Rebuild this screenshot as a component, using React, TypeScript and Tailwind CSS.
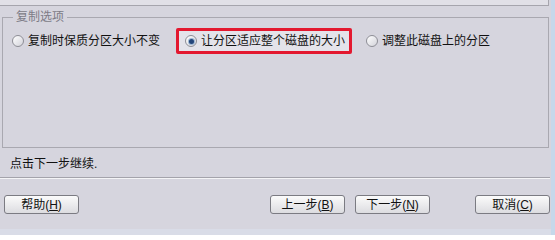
import React from "react";

const FONT = { fontFamily: '"Liberation Sans","Noto Sans CJK SC",sans-serif' };

function Radio({ checked }: { checked?: boolean }) {
  return (
    <span className="flex h-[12px] w-[12px] shrink-0 items-center justify-center rounded-full border border-[#8e8e96] bg-linear-to-br from-white to-[#d3d3da]">
      {checked && (
        <span className="flex h-[7px] w-[7px] items-center justify-center rounded-full bg-[#9fb7d3]">
          <span className="h-[5px] w-[5px] rounded-full bg-[#23457a]" />
        </span>
      )}
    </span>
  );
}

function Btn({ label, acc, className }: { label: string; acc: string; className?: string }) {
  return (
    <div
      className={
        "flex h-[19px] w-[75px] items-center justify-center rounded-[3px] border border-[#7b7b82] bg-linear-to-b from-[#fbfbfb] to-[#dcdce0] text-[12px] leading-[14px] text-[#111] " +
        (className ?? "")
      }
    >
      <span>
        {label}(<span className="underline">{acc}</span>)
      </span>
    </div>
  );
}

export default function App() {
  return (
    <div className="flex h-[235px] w-[555px] overflow-hidden bg-[#d6d5de]" style={FONT}>
      <div className="flex w-[551px] flex-col">
        <div className="h-[6px] w-[549px] border-r border-b border-[#a6a5ad] bg-[#e1e0e7]" />
        <fieldset className="mt-[4px] ml-[2px] h-[138px] w-[547px] border border-[#a9a8b0]">
          <legend className="ml-[10px] px-[3px] text-[12px] leading-[14px] text-[#7d7c86]">复制选项</legend>
          <div className="mt-[4px] flex h-[26px] items-center pl-[9px] text-[12px] leading-[14px] text-[#111]">
            <Radio />
            <span className="ml-[4px]">复制时保质分区大小不变</span>
            <div className="ml-[16px] flex h-[26px] w-[176px] items-center rounded-[2px] border-[3px] border-[#e3182f] bg-[#e4e3ea] pl-[6px]">
              <Radio checked />
              <span className="ml-[4px]">让分区适应整个磁盘的大小</span>
            </div>
            <div className="ml-[14px] flex items-center">
              <Radio />
              <span className="ml-[4px]">调整此磁盘上的分区</span>
            </div>
          </div>
        </fieldset>
        <div className="h-[29px] pt-[9px] pl-[10px] text-[12px] leading-[14px] text-[#111]">点击下一步继续.</div>
        <div className="h-[2px] w-[550px] border-t border-b border-t-[#a4a3ab] border-b-[#f4f4f6]" />
        <div className="mt-[16px] flex">
          <Btn label="帮助" acc="H" className="ml-[4px]" />
          <Btn label="上一步" acc="B" className="ml-[191px]" />
          <Btn label="下一步" acc="N" className="ml-[10px]" />
          <Btn label="取消" acc="C" className="ml-[45px]" />
        </div>
        <div className="mt-auto h-[6px] bg-[#d9dce7]" />
      </div>
      <div className="w-[4px] bg-[#c6d8ea]" />
    </div>
  );
}
